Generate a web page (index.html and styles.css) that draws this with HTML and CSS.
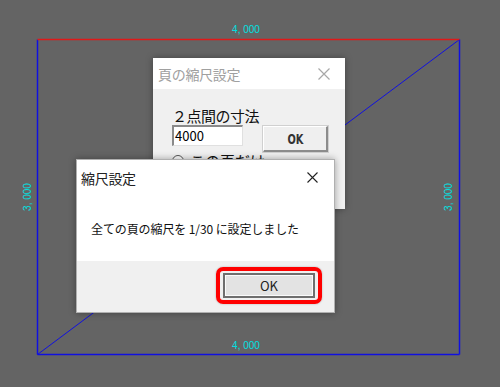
FILE: index.html
```html
<!DOCTYPE html>
<html lang="ja">
<head>
<meta charset="utf-8">
<link rel="stylesheet" href="styles.css">
</head>
<body>
<div class="desk">
  <svg class="canvas" width="500" height="387" viewBox="0 0 500 387">
    <line x1="37.5" y1="39.5" x2="37.5" y2="354.5" stroke="#1010e0" stroke-width="1.5"/>
    <line x1="459.5" y1="39.5" x2="459.5" y2="354.5" stroke="#1010e0" stroke-width="1.5"/>
    <line x1="37.5" y1="354.5" x2="459.5" y2="354.5" stroke="#1010e0" stroke-width="1.5"/>
    <line x1="37.5" y1="354.5" x2="459.5" y2="39.5" stroke="#1010e0" stroke-width="1"/>
    <line x1="37.5" y1="39.5" x2="459.5" y2="39.5" stroke="#e01818" stroke-width="1.5"/>
    <text class="dim" x="246" y="33" text-anchor="middle">4, 000</text>
    <text class="dim" x="246" y="349" text-anchor="middle">4, 000</text>
    <text class="dim" x="0" y="0" text-anchor="middle" transform="translate(31 197) rotate(-90)">3, 000</text>
    <text class="dim" x="0" y="0" text-anchor="middle" transform="translate(452 197) rotate(-90)">3, 000</text>
  </svg>

  <div class="win back">
    <div class="titlebar">
      <span class="title">頁の縮尺設定</span>
      <svg class="close" width="12" height="12" viewBox="0 0 12 12"><path d="M0.5 0.5 L11.5 11.5 M11.5 0.5 L0.5 11.5" stroke="#a8a8a8" stroke-width="1.2" fill="none"/></svg>
    </div>
    <div class="back-body">
      <div class="label">２点間の寸法</div>
      <div class="row">
        <div class="input">4000</div>
        <div class="btn-old"><span class="narrow">OK</span></div>
      </div>
      <div class="radio"><span class="dot"></span>この頁だけ</div>
    </div>
  </div>

  <div class="win front">
    <div class="titlebar front-bar">
      <span class="title dark">縮尺設定</span>
      <svg class="close" width="11" height="11" viewBox="0 0 11 11"><path d="M0.5 0.5 L10.5 10.5 M10.5 0.5 L0.5 10.5" stroke="#222" stroke-width="1.1" fill="none"/></svg>
    </div>
    <div class="msg">全ての頁の縮尺を 1/30 に設定しました</div>
    <div class="footer">
      <div class="hilite"><div class="btn">OK</div></div>
    </div>
  </div>
</div>
</body>
</html>
```

FILE: styles.css
```css
html, body {
  margin: 0;
  padding: 0;
}
body {
  background: #646464;
  width: 500px;
  height: 387px;
  overflow: hidden;
  font-family: "Noto Sans CJK JP", "Noto Sans", sans-serif;
}
.desk {
  position: relative;
  width: 500px;
  height: 387px;
}
.canvas {
  position: absolute;
  left: 0;
  top: 0;
}
.dim {
  fill: #00e0e0;
  font-family: "Liberation Sans", Arial, sans-serif;
  font-size: 10px;
}
.win {
  position: absolute;
  display: flex;
  flex-direction: column;
  box-shadow: 0 0 7px rgba(0, 0, 0, 0.35);
}
.back {
  left: 153px;
  top: 58px;
  width: 192px;
  height: 151px;
  background: #f0f0f0;
}
.titlebar {
  height: 31px;
  background: #fff;
  display: flex;
  align-items: center;
  justify-content: space-between;
  padding: 0 15px 0 5px;
  flex: none;
}
.title {
  font-size: 14px;
  color: #a0a0a0;
  line-height: 1;
  letter-spacing: -0.3px;
}
.title.dark {
  color: #222;
}
.back-body {
  padding: 18px 0 0 19px;
  display: flex;
  flex-direction: column;
}
.label {
  font-size: 15px;
  color: #111;
  line-height: 18px;
  letter-spacing: -0.5px;
}
.row {
  display: flex;
  gap: 20px;
  margin-top: 0;
  align-items: flex-start;
}
.input {
  height: 18px;
  background: #fff;
  border-top: 2px solid #8a8a8a;
  border-left: 2px solid #8a8a8a;
  border-right: 1px solid #e0e0e0;
  border-bottom: 1px solid #e0e0e0;
  font-size: 13px;
  line-height: 18px;
  padding-left: 1px;
  color: #000;
  width: 67px;
}
.btn-old {
  margin-top: 1px;
  width: 62px;
  height: 23px;
  background: #efefef;
  border-top: 1px solid #fff;
  border-left: 1px solid #fff;
  border-right: 2px solid #8c8c8c;
  border-bottom: 2px solid #8c8c8c;
  box-shadow: 0 0 0 1px #d0d0d0;
  display: flex;
  align-items: center;
  justify-content: center;
  font-family: "DejaVu Sans", sans-serif;
  font-weight: bold;
  font-size: 14px;
  color: #333;
}
.narrow {
  display: inline-block;
  transform: scaleX(0.7);
}
.radio {
  display: flex;
  align-items: center;
  gap: 6px;
  margin-top: 0;
  font-size: 15px;
  color: #111;
  line-height: 18px;
}
.dot {
  width: 10px;
  height: 10px;
  border: 1px solid #555;
  border-radius: 50%;
  background: #fff;
}
.front {
  left: 76px;
  top: 159px;
  width: 259px;
  height: 154px;
  background: #fff;
  border: 1px solid #b0b0b0;
  box-sizing: border-box;
}
.front-bar {
  height: 35px;
  padding: 0 16px 0 4px;
  background: transparent;
}
.msg {
  flex: 1;
  font-size: 12px;
  color: #111;
  padding: 26px 0 0 14px;
  letter-spacing: -0.1px;
  line-height: 16px;
}
.footer {
  height: 51px;
  flex: none;
  background: #f0f0f0;
  display: flex;
  justify-content: flex-end;
  align-items: flex-start;
  padding: 6px 12px 0 0;
  box-sizing: border-box;
}
.hilite {
  border: 4px solid #ff0000;
  border-radius: 7px;
  padding: 2px 3px;
  box-shadow: 0 0 2px rgba(0, 0, 0, 0.3);
}
.btn {
  width: 88px;
  height: 21px;
  background: #e3e3e3;
  border: 2px solid #6e6e6e;
  box-shadow: inset 0 0 0 1px #fafafa;
  display: flex;
  align-items: center;
  justify-content: center;
  font-size: 13px;
  color: #222;
  line-height: 1;
}
```
